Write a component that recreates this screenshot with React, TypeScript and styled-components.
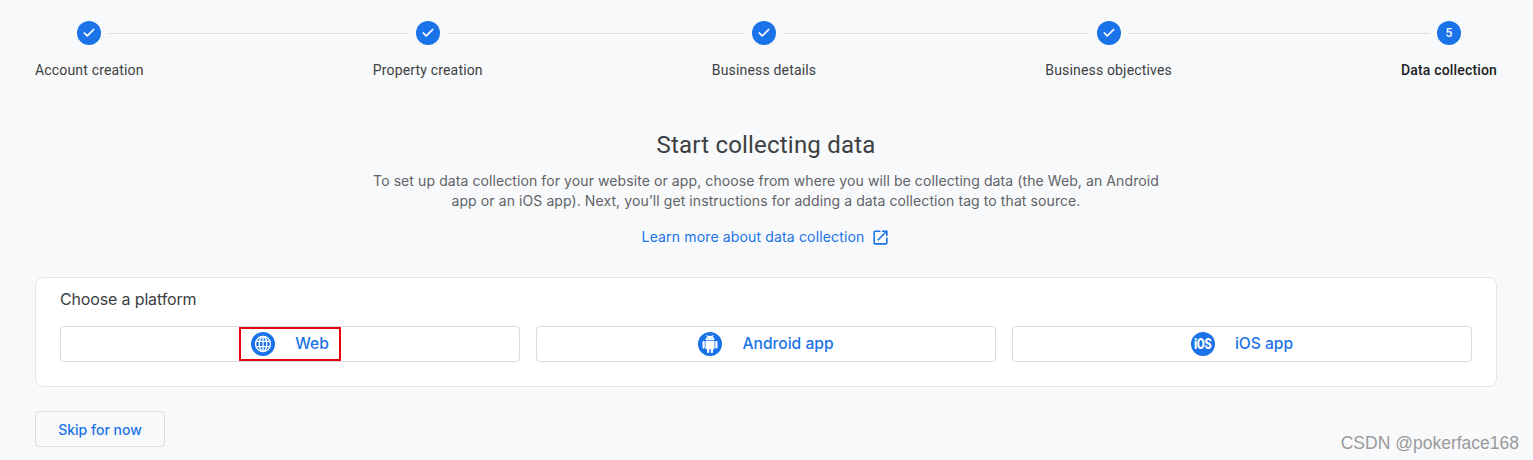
import React from "react";
import styled, { createGlobalStyle } from "styled-components";
import { Check } from "lucide-react";
import { MdOpenInNew } from "react-icons/md";

const Global = createGlobalStyle`
  html, body { margin: 0; padding: 0; background: #f8f9fa; }
  body { font-family: Roboto, "Liberation Sans", sans-serif; overflow: hidden; }
`;

const Page = styled.div`
  width: 1533px;
  height: 460px;
  box-sizing: border-box;
  padding: 21px 36px 0 35px;
  position: relative;
  overflow: hidden;
`;

const Stepper = styled.div`
  display: flex;
  align-items: flex-start;
`;

const Step = styled.div`
  flex: none;
  display: flex;
  flex-direction: column;
  align-items: center;
  gap: 15px;
  position: relative;
  z-index: 1;
`;

const Circle = styled.div`
  width: 24px;
  height: 24px;
  border-radius: 50%;
  background: #1a73e8;
  color: #fff;
  display: flex;
  align-items: center;
  justify-content: center;
  font-size: 12px;
  font-weight: 500;
`;

const StepLabel = styled.div<{ $active?: boolean }>`
  font-size: 14px;
  line-height: 20px;
  letter-spacing: 0.17px;
  white-space: nowrap;
  color: ${(p) => (p.$active ? "#202124" : "#3c4043")};
  font-weight: ${(p) => (p.$active ? 500 : 400)};
`;

const Connector = styled.div<{ $left: number; $right: number }>`
  flex: 1 0 ${(p) => p.$left + p.$right}px;
  height: 1px;
  margin: 12px ${(p) => -p.$right}px 0 ${(p) => -p.$left}px;
  background: #dadce0;
`;

const Intro = styled.div`
  display: flex;
  flex-direction: column;
  align-items: center;
  margin-top: 49px;
`;

const Heading = styled.h1`
  margin: 0;
  font-family: Roboto, sans-serif;
  font-size: 24px;
  line-height: 32px;
  font-weight: 400;
  letter-spacing: 0.2px;
  color: #3c4043;
`;

const Lead = styled.p`
  margin: 10px 0 0;
  width: 800px;
  text-align: center;
  font-family: Inter, Roboto, sans-serif;
  font-size: 14px;
  line-height: 20px;
  letter-spacing: 0.09px;
  color: #5f6368;
`;

const LearnLink = styled.a`
  margin-top: 16px;
  display: flex;
  align-items: center;
  gap: 7px;
  font-family: Inter, Roboto, sans-serif;
  font-size: 14px;
  line-height: 20px;
  letter-spacing: 0.15px;
  color: #1a73e8;
`;

const Card = styled.section`
  margin-top: 30px;
  height: 110px;
  box-sizing: border-box;
  padding: 11px 24px 0;
  background: #fff;
  border: 1px solid #e3e5e8;
  border-radius: 8px;
`;

const CardTitle = styled.div`
  font-family: Inter, Roboto, sans-serif;
  font-size: 16px;
  line-height: 20px;
  letter-spacing: -0.15px;
  color: #3c4043;
`;

const Platforms = styled.div`
  display: grid;
  grid-template-columns: repeat(3, 1fr);
  gap: 16px;
  margin-top: 17px;
`;

const PlatformButton = styled.button`
  height: 36px;
  padding: 0 0 1px;
  display: flex;
  align-items: center;
  justify-content: center;
  gap: 20px;
  background: #fff;
  border: 1px solid #dadce0;
  border-radius: 4px;
  font-family: Inter, Roboto, sans-serif;
  font-size: 15.6px;
  font-weight: 500;
  color: #1a73e8;
  position: relative;
`;

const IconDisc = styled.span`
  width: 24px;
  height: 24px;
  border-radius: 50%;
  background: #1a73e8;
  color: #fff;
  display: flex;
  align-items: center;
  justify-content: center;
`;

const IosMark = styled.span`
  display: inline-block;
  font-family: Roboto, sans-serif;
  font-size: 14px;
  font-weight: 900;
  letter-spacing: -0.3px;
  transform: scaleX(0.82);
`;

const Highlight = styled.span`
  position: absolute;
  left: 178px;
  top: 0;
  width: 102px;
  height: 34px;
  box-sizing: border-box;
  border: 2px solid #e60012;
`;

const SkipButton = styled.button`
  display: block;
  margin-top: 24px;
  width: 130px;
  height: 36px;
  padding: 0;
  background: #f8f9fa;
  border: 1px solid #dadce0;
  border-radius: 4px;
  font-family: Inter, Roboto, sans-serif;
  font-size: 14px;
  font-weight: 500;
  color: #1a73e8;
`;

const Watermark = styled.div`
  position: absolute;
  right: 14px;
  bottom: 7px;
  font-family: "Liberation Sans", sans-serif;
  font-size: 17.5px;
  line-height: 20px;
  color: #9a9a9a;
`;

const GlobeIcon = () => (
  <svg width="20" height="20" viewBox="0 0 24 24" fill="none" stroke="currentColor" strokeWidth="1.6">
    <circle cx="12" cy="12" r="9" />
    <ellipse cx="12" cy="12" rx="4.5" ry="9" />
    <path d="M3.8 8.8h16.4M3.8 15.2h16.4M12 3v18" />
  </svg>
);

const AndroidIcon = () => (
  <svg width="18" height="18" viewBox="0 0 24 24" fill="currentColor">
    <path d="M6 18c0 .55.45 1 1 1h1v3.5c0 .83.67 1.5 1.5 1.5s1.5-.67 1.5-1.5V19h2v3.5c0 .83.67 1.5 1.5 1.5s1.5-.67 1.5-1.5V19h1c.55 0 1-.45 1-1V8H6v10zM3.5 8C2.67 8 2 8.67 2 9.5v7c0 .83.67 1.5 1.5 1.5S5 17.33 5 16.5v-7C5 8.67 4.33 8 3.5 8zm17 0c-.83 0-1.5.67-1.5 1.5v7c0 .83.67 1.5 1.5 1.5s1.5-.67 1.5-1.5v-7c0-.83-.67-1.5-1.5-1.5zm-4.97-5.84l1.3-1.3c.2-.2.2-.51 0-.71-.2-.2-.51-.2-.71 0l-1.48 1.48C13.85 1.23 12.95 1 12 1c-.96 0-1.86.23-2.66.63L7.85.15c-.2-.2-.51-.2-.71 0-.2.2-.2.51 0 .71l1.31 1.31C6.97 3.26 6 5.01 6 7h12c0-1.99-.97-3.75-2.47-4.84zM10 5H9V4h1v1zm5 0h-1V4h1v1z" />
  </svg>
);

const steps = ["Account creation", "Property creation", "Business details", "Business objectives", "Data collection"];
const halves = [34.5, 35, 32, 43.5, 28.5];

export default function App() {
  return (
    <Page>
      <Global />
      <Stepper>
        {steps.map((label, i) => (
          <React.Fragment key={label}>
            <Step>
              <Circle>{i < 4 ? <Check size={14} strokeWidth={3} /> : "5"}</Circle>
              <StepLabel $active={i === 4}>{label}</StepLabel>
            </Step>
            {i < 4 && <Connector $left={halves[i]} $right={halves[i + 1]} />}
          </React.Fragment>
        ))}
      </Stepper>
      <Intro>
        <Heading>Start collecting data</Heading>
        <Lead>
          To set up data collection for your website or app, choose from where you will be collecting data (the Web, an Android app or an iOS app). Next, you’ll get instructions for adding a data collection tag to that source.
        </Lead>
        <LearnLink>
          Learn more about data collection
          <MdOpenInNew size={19} />
        </LearnLink>
      </Intro>
      <Card>
        <CardTitle>Choose a platform</CardTitle>
        <Platforms>
          <PlatformButton>
            <IconDisc><GlobeIcon /></IconDisc>
            Web
            <Highlight />
          </PlatformButton>
          <PlatformButton>
            <IconDisc><AndroidIcon /></IconDisc>
            Android app
          </PlatformButton>
          <PlatformButton>
            <IconDisc><IosMark>iOS</IosMark></IconDisc>
            iOS app
          </PlatformButton>
        </Platforms>
      </Card>
      <SkipButton>Skip for now</SkipButton>
      <Watermark>CSDN @pokerface168</Watermark>
    </Page>
  );
}
